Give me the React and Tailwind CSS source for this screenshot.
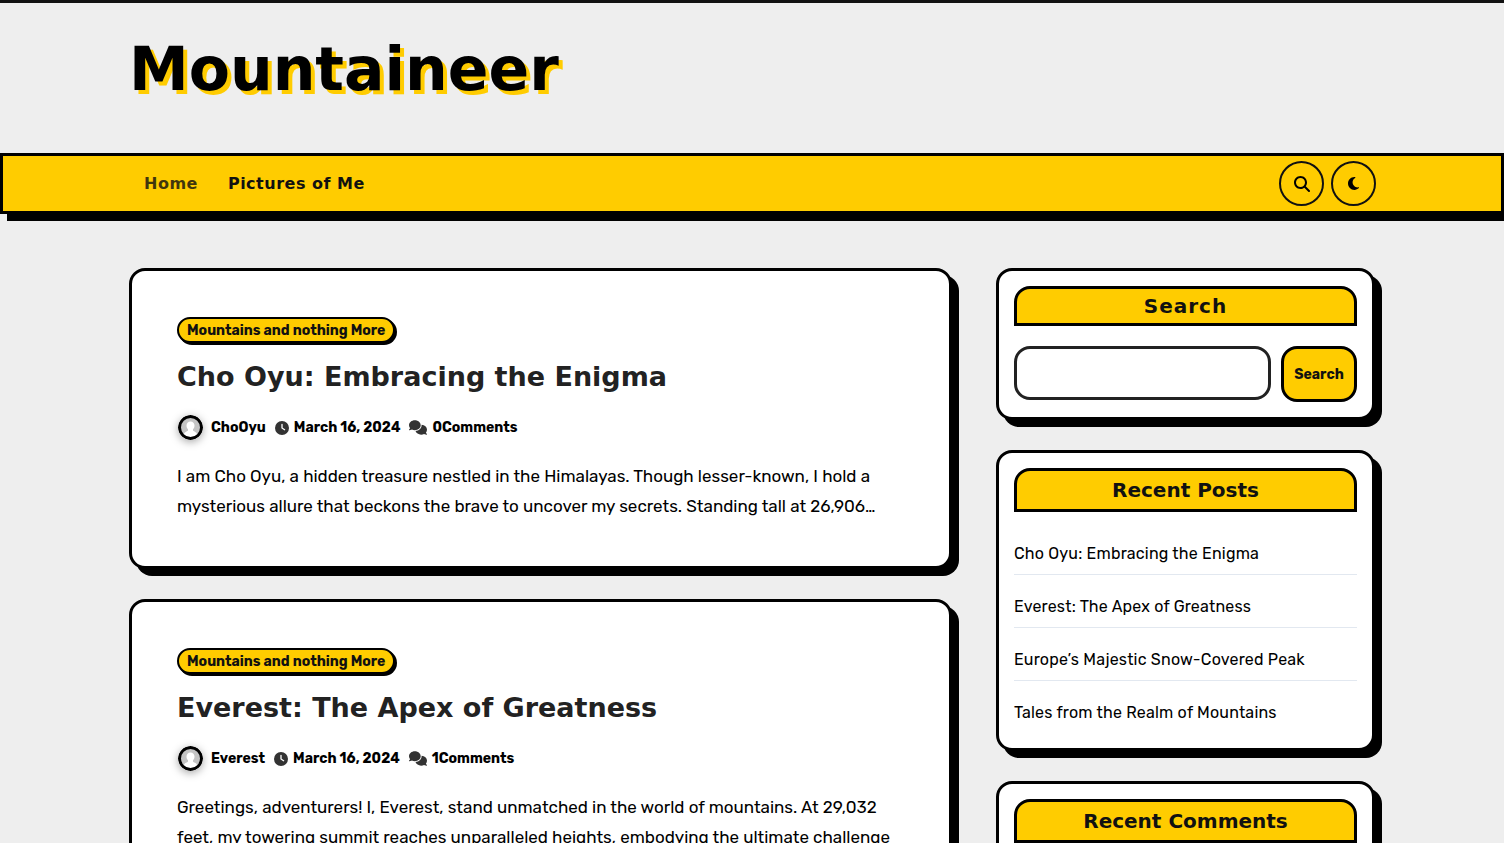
import React from "react";
import { FaClock, FaComments, FaMagnifyingGlass } from "react-icons/fa6";

const posts = [
  {
    title: "Cho Oyu: Embracing the Enigma",
    author: "ChoOyu",
    comments: "0Comments",
    text: "I am Cho Oyu, a hidden treasure nestled in the Himalayas. Though lesser-known, I hold a mysterious allure that beckons the brave to uncover my secrets. Standing tall at 26,906…",
  },
  {
    title: "Everest: The Apex of Greatness",
    author: "Everest",
    comments: "1Comments",
    text: "Greetings, adventurers! I, Everest, stand unmatched in the world of mountains. At 29,032 feet, my towering summit reaches unparalleled heights, embodying the ultimate challenge",
  },
];

const recent = [
  "Cho Oyu: Embracing the Enigma",
  "Everest: The Apex of Greatness",
  "Europe’s Majestic Snow-Covered Peak",
  "Tales from the Realm of Mountains",
];

function Avatar() {
  return (
    <svg viewBox="0 0 25 25" className="size-[25px] rounded-full shadow-[0_2px_8px_rgba(0,0,0,0.35)]" aria-hidden="true">
      <circle cx="12.5" cy="12.5" r="12" fill="#c4c4c4" />
      <path d="M12.500 6.500c2.400 0 4 1.700 4 4 0 1.600-.6 2.900-1.500 3.700v1.300c0 .7 3.600 1.200 4.200 3.800L16 23H9l-3.200-3.700c.6-2.600 4.200-3.100 4.200-3.800v-1.300c-.9-.8-1.500-2.100-1.500-3.700 0-2.300 1.600-4 4-4z" fill="#fff" />
      <circle cx="12.500" cy="12.500" r="11" fill="none" stroke="#000" strokeWidth="3" />
    </svg>
  );
}

function Moon() {
  return (
    <svg viewBox="0 0 384 512" className="h-[15px] w-[11px]" fill="currentColor" aria-hidden="true">
      <path d="M223.500 32C100 32 0 132.300 0 256s100 224 223.500 224c60.600 0 115.500-24.200 155.800-63.400c5-4.900 6.300-12.500 3.100-18.700s-10.100-9.700-17-8.500c-9.800 1.700-19.800 2.600-30.100 2.600c-96.900 0-175.500-78.800-175.500-176c0-65.800 36-123.100 89.300-153.300c6.100-3.500 9.200-10.500 7.700-17.300s-7.300-11.900-14.300-12.500c-6.300-.5-12.600-.8-19-.8z" />
    </svg>
  );
}

function Post({ post }) {
  return (
    <article className="rounded-2xl border-3 border-black bg-white px-[45px] pt-[46px] pb-[45px] shadow-[7px_7px_0_#000]">
      <a href="#category" className="flex h-[26px] w-fit items-center rounded-full border-2 border-black bg-[#ffcc00] px-2 pt-0.5 text-sm font-bold text-[#111] shadow-[2px_2px_0_#000]">
        Mountains and nothing More
      </a>
      <h2 className="mt-4 font-['DejaVu_Sans',sans-serif] text-[27px] leading-9 font-bold text-[#222]">
        <a href="#post">{post.title}</a>
      </h2>
      <div className="mt-5 flex h-[25px] items-center gap-[9px] pl-px text-sm font-bold text-black">
        <a href="#author" className="flex items-center gap-2"><Avatar />{post.author}</a>
        <span className="flex items-center gap-[5px]"><FaClock className="size-[14px] text-[#333]" />March 16, 2024</span>
        <a href="#comments" className="flex items-center gap-[5px]"><FaComments className="h-[15px] w-[18px] text-[#333]" />{post.comments}</a>
      </div>
      <p className="mt-[21px] text-[17px] leading-[30px] text-black">{post.text}</p>
    </article>
  );
}

function Widget({ children }) {
  return <section className="rounded-2xl border-3 border-black bg-white p-[15px] shadow-[7px_7px_0_#000]">{children}</section>;
}

function WidgetTitle({ children, className = "h-11" }) {
  return (
    <h2 className={`${className} flex items-center justify-center rounded-t-2xl border-3 border-black bg-[#ffcc00] font-['DejaVu_Sans',sans-serif] text-xl leading-6 font-bold text-[#111]`}>
      {children}
    </h2>
  );
}

export default function App() {
  return (
    <div className="min-h-screen overflow-x-clip border-t-3 border-[#111] bg-[#eee] pb-12 font-[Rubik,Inter,sans-serif] text-black">
      <header className="px-4 pt-7 pb-[46px]">
        <div className="mx-auto max-w-[1246px]">
          <h1 className="font-['DejaVu_Sans',sans-serif] text-[60px] leading-[76px] font-bold text-black [text-shadow:4px_4px_0_#ffcc00]">
            <a href="#home">Mountaineer</a>
          </h1>
        </div>
      </header>
      <nav className="border-3 border-black bg-[#ffcc00] px-4 shadow-[7px_7px_0_#000]">
        <div className="mx-auto flex h-[55px] max-w-[1248px] items-center justify-between pl-4">
          <div className="flex gap-[30px] font-['DejaVu_Sans',sans-serif] text-base font-bold tracking-[0.5px] text-[#111]">
            <a href="#home" className="opacity-80">Home</a>
            <a href="#pictures">Pictures of Me</a>
          </div>
          <div className="flex gap-[7px]">
            <button aria-label="Search" className="flex size-[45px] items-center justify-center rounded-full border-2 border-[#111]"><FaMagnifyingGlass className="size-4" /></button>
            <button aria-label="Dark mode" className="flex size-[45px] items-center justify-center rounded-full border-2 border-[#111]"><Moon /></button>
          </div>
        </div>
      </nav>
      <div className="px-4 pt-[54px]">
        <div className="mx-auto flex max-w-[1246px] flex-col gap-11 lg:flex-row">
          <main className="flex min-w-0 flex-1 flex-col gap-[30px]">
            {posts.map((p) => <Post key={p.title} post={p} />)}
          </main>
          <aside className="flex shrink-0 flex-col gap-[30px] lg:w-[379px]">
            <Widget>
              <WidgetTitle className="h-10 tracking-[1px]"><label htmlFor="search">Search</label></WidgetTitle>
              <form className="mt-5 flex items-start gap-[10px]">
                <input id="search" type="search" className="h-[54px] min-w-0 flex-1 rounded-2xl border-3 border-[#222] bg-white px-3" />
                <button type="button" className="h-14 w-[76px] rounded-2xl border-3 border-black bg-[#ffcc00] pt-0.5 text-sm font-bold text-[#111]">Search</button>
              </form>
            </Widget>
            <Widget>
              <WidgetTitle>Recent Posts</WidgetTitle>
              <ul className="mt-[10px] divide-y divide-slate-200">
                {recent.map((r) => (
                  <li key={r} className="pt-5 pb-2 leading-6 tracking-[0.2px]"><a href="#post">{r}</a></li>
                ))}
              </ul>
            </Widget>
            <Widget>
              <WidgetTitle>Recent Comments</WidgetTitle>
            </Widget>
          </aside>
        </div>
      </div>
    </div>
  );
}
